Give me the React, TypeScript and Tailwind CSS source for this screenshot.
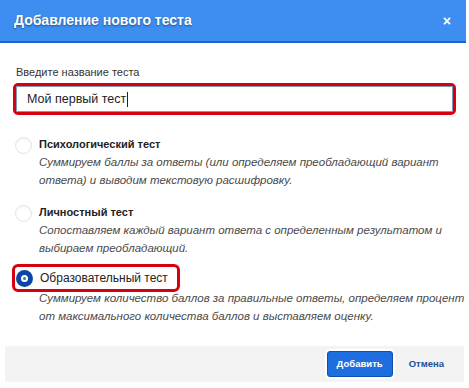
const options = [
  {
    title: 'Психологический тест',
    lines: ['Суммируем баллы за ответы (или определяем преобладающий вариант', 'ответа) и выводим текстовую расшифровку.'],
  },
  {
    title: 'Личностный тест',
    lines: ['Сопоставляем каждый вариант ответа с определенным результатом и', 'выбираем преобладающий.'],
  },
]

const Radio = () => (
  <span className="block h-[17px] w-[17px] shrink-0 rounded-full border border-[#e4e4e4] bg-white shadow-[inset_0_1px_2px_rgba(0,0,0,0.06)]" />
)

const App = () => {
  return (
    <div className="h-[388px] w-[469px] overflow-hidden bg-white font-[family-name:'Liberation_Sans',Arial,sans-serif]">
      <div className="mr-[3px] flex h-[43px] items-center justify-between border-b-2 border-[#1f66cc] bg-[#3d8ef0] pl-[14px] pr-[15px]">
        <h1 className="text-[14px] font-bold text-white [text-shadow:0_1px_2px_rgba(0,0,0,0.45)]">Добавление нового теста</h1>
        <span className="text-[14px] font-bold leading-none text-white">×</span>
      </div>

      <div className="px-[13px] pt-[21px]">
        <label className="block pl-[3px] text-[11px] leading-[16px] text-[#333]">Введите название теста</label>
        <div className="mt-[3px] h-[32px] w-[443px] rounded-[5px] border-[3px] border-[#d7000f]">
          <div className="flex h-full items-center border border-[#8297bb] bg-white pl-[10px] text-[12.5px] text-[#222]">
            Мой первый тест<span className="ml-[1px] inline-block h-[15px] w-[1px] bg-[#222]" />
          </div>
        </div>
      </div>

      <div className="flex flex-col px-[15px] pt-[21px]">
        {options.map((o, i) => (
          <div key={o.title} className={i === 0 ? 'flex gap-[7px]' : 'mt-[15px] flex gap-[7px]'}>
            <div className="pt-[1px]">
              <Radio />
            </div>
            <div className="whitespace-nowrap">
              <div className="text-[11px] font-bold leading-[17px] text-[#222]">{o.title}</div>
              <div className="text-[11.5px] italic leading-[18px] text-[#4a4a4a]">
                {o.lines.map((l) => (
                  <div key={l}>{l}</div>
                ))}
              </div>
            </div>
          </div>
        ))}

        <div className="mt-[7px]">
          <div className="-ml-[3px] flex h-[28px] w-[168px] items-center gap-[7px] whitespace-nowrap rounded-[6px] border-[3px] border-[#d7000f] pl-[1px]">
            <span className="flex h-[17px] w-[17px] shrink-0 items-center justify-center rounded-full bg-[#0b46a5]">
              <span className="h-[7px] w-[7px] rounded-full border-2 border-white bg-[#2f6fd0]" />
            </span>
            <span className="text-[12px] text-[#222]">Образовательный тест</span>
          </div>
          <div className="-mt-[3px] whitespace-nowrap pl-[24px] text-[11.5px] italic leading-[18px] text-[#4a4a4a]">
            <div>Суммируем количество баллов за правильные ответы, определяем процент</div>
            <div>от максимального количества баллов и выставляем оценку.</div>
          </div>
        </div>
      </div>

      <div className="mx-[5px] mt-[21px] flex h-[36px] items-center justify-end gap-[16px] bg-[#f3f3f3] pr-[20px]">
        <button className="h-[26px] rounded-[3px] border border-[#0b4fb4] bg-[#1f6ee0] px-[9px] text-[9.5px] font-bold text-white shadow-[0_0_0_2px_#ffffff]">
          Добавить
        </button>
        <button className="text-[9.5px] font-bold text-[#1c4f9c]">Отмена</button>
      </div>
    </div>
  )
}

export default App
